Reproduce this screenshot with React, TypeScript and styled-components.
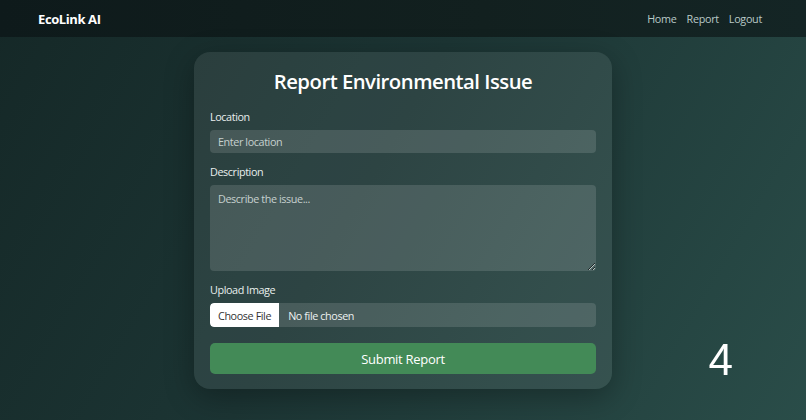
import React from "react";
import styled, { createGlobalStyle } from "styled-components";

const GlobalStyle = createGlobalStyle`
  * { box-sizing: border-box; }
  html, body { margin: 0; padding: 0; }
  body {
    font-family: "Open Sans", "Noto Sans", sans-serif;
    background: #1c3433;
  }
`;

const Page = styled.div`
  min-height: 100vh;
  display: flex;
  flex-direction: column;
  background: linear-gradient(120deg, #152827 0%, #1c3534 45%, #2a4d49 100%);
`;

const NavBar = styled.nav`
  height: 37px;
  display: flex;
  align-items: center;
  justify-content: space-between;
  padding: 0 44px 0 38px;
  background: linear-gradient(90deg, #0e1a1b 0%, #12201f 60%, #142525 100%);
`;

const Brand = styled.div`
  color: #ffffff;
  font-weight: 700;
  font-size: 13px;
  letter-spacing: -0.4px;
`;

const NavLinks = styled.div`
  display: flex;
  gap: 10px;
`;

const NavLink = styled.a`
  color: #b9c9c7;
  font-size: 10.8px;
  text-decoration: none;
  letter-spacing: -0.3px;
`;

const Main = styled.main`
  display: flex;
  justify-content: center;
  padding-top: 15px;
`;

const Card = styled.form`
  width: 418px;
  padding: 16px 16px 15px;
  border-radius: 16px;
  background: rgba(255, 255, 255, 0.08);
  box-shadow: 0 8px 30px rgba(0, 0, 0, 0.3);
  display: flex;
  flex-direction: column;
`;

const Title = styled.h2`
  margin: 0 0 15px;
  text-align: center;
  color: #ffffff;
  font-size: 20.3px;
  line-height: 26px;
  font-weight: 600;
  letter-spacing: -0.5px;
`;

const Field = styled.div<{ $last?: boolean }>`
  display: flex;
  flex-direction: column;
  margin-bottom: ${(p) => (p.$last ? "16px" : "11px")};
`;

const Label = styled.label`
  color: #e9efee;
  font-size: 10.8px;
  letter-spacing: -0.4px;
  line-height: 16px;
  margin-bottom: 5px;
`;

const TextInput = styled.input`
  height: 23px;
  border: none;
  border-radius: 4px;
  padding: 0 8px;
  background: rgba(255, 255, 255, 0.13);
  color: #ffffff;
  font-family: inherit;
  font-size: 10.8px;
  letter-spacing: -0.4px;
  outline: none;
  &::placeholder { color: #c6d1cf; }
`;

const TextArea = styled.textarea`
  height: 86px;
  border: none;
  border-radius: 4px;
  padding: 6px 8px;
  background: rgba(255, 255, 255, 0.13);
  color: #ffffff;
  font-family: inherit;
  font-size: 10.8px;
  letter-spacing: -0.4px;
  outline: none;
  resize: vertical;
  &::placeholder { color: #c6d1cf; }
`;

const FileInput = styled.input`
  height: 24px;
  border-radius: 4px;
  background: rgba(255, 255, 255, 0.13);
  color: #eef2f1;
  font-family: inherit;
  font-size: 10.8px;
  letter-spacing: -0.4px;
  padding: 0;
  &::file-selector-button {
    height: 24px;
    padding: 0 8px;
    margin-right: 9px;
    border: none;
    border-radius: 4px 0 0 4px;
    background: #ffffff;
    color: #333333;
    font-family: inherit;
    font-size: 10.8px;
    letter-spacing: -0.4px;
  }
`;

const SubmitButton = styled.button`
  height: 31px;
  border: none;
  border-radius: 5px;
  background: #438a57;
  color: #ffffff;
  font-family: inherit;
  font-size: 13px;
  letter-spacing: -0.3px;
  cursor: pointer;
`;

const PageNumber = styled.div`
  position: fixed;
  right: 73px;
  bottom: 38px;
  color: #ffffff;
  font-family: "Liberation Sans", Arial, sans-serif;
  font-size: 44px;
  line-height: 1;
`;

export default function App() {
  return (
    <>
      <GlobalStyle />
      <Page>
        <NavBar>
          <Brand>EcoLink AI</Brand>
          <NavLinks>
            <NavLink href="#">Home</NavLink>
            <NavLink href="#">Report</NavLink>
            <NavLink href="#">Logout</NavLink>
          </NavLinks>
        </NavBar>
        <Main>
          <Card onSubmit={(e) => e.preventDefault()}>
            <Title>Report Environmental Issue</Title>
            <Field>
              <Label>Location</Label>
              <TextInput type="text" placeholder="Enter location" />
            </Field>
            <Field>
              <Label>Description</Label>
              <TextArea placeholder="Describe the issue..." />
            </Field>
            <Field $last>
              <Label>Upload Image</Label>
              <FileInput type="file" accept="image/*" />
            </Field>
            <SubmitButton type="submit">Submit Report</SubmitButton>
          </Card>
        </Main>
        <PageNumber>4</PageNumber>
      </Page>
    </>
  );
}
